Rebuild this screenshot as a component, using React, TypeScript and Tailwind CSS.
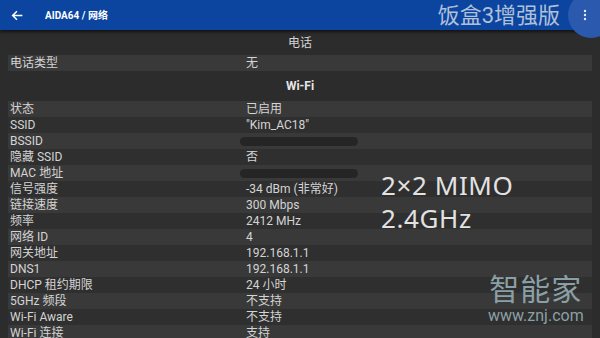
import React from "react";

const font = { fontFamily: 'Roboto, "Noto Sans CJK SC", sans-serif' };
const wideFont = { fontFamily: '"Noto Sans", "Noto Sans CJK SC", sans-serif' };

type Row = { label: string; value?: string; masked?: boolean };

const phoneRows: Row[] = [{ label: "电话类型", value: "无" }];

const wifiRows: Row[] = [
  { label: "状态", value: "已启用" },
  { label: "SSID", value: '"Kim_AC18"' },
  { label: "BSSID", masked: true },
  { label: "隐藏 SSID", value: "否" },
  { label: "MAC 地址", masked: true },
  { label: "信号强度", value: "-34 dBm (非常好)" },
  { label: "链接速度", value: "300 Mbps" },
  { label: "频率", value: "2412 MHz" },
  { label: "网络 ID", value: "4" },
  { label: "网关地址", value: "192.168.1.1" },
  { label: "DNS1", value: "192.168.1.1" },
  { label: "DHCP 租约期限", value: "24 小时" },
  { label: "5GHz 频段", value: "不支持" },
  { label: "Wi-Fi Aware", value: "不支持" },
  { label: "Wi-Fi 连接", value: "支持" },
];

const InfoRows: React.FC<{ rows: Row[] }> = ({ rows }) => (
  <div className="flex flex-col px-2">
    {rows.map((r, i) => (
      <div
        key={r.label}
        className={`flex h-4 items-center text-[12px] text-[#d4d4d4] ${
          i % 2 === 0 ? "bg-[#393939]" : "bg-[#2f2f2f]"
        }`}
      >
        <span className="w-[238px] pl-[2px]">{r.label}</span>
        {r.masked ? (
          <span className="-ml-[6px] h-[9px] w-[118px] rounded-full bg-[#252525]" />
        ) : (
          <span>{r.value}</span>
        )}
      </div>
    ))}
  </div>
);

const App: React.FC = () => {
  return (
    <div className="relative h-[338px] w-[600px] overflow-hidden bg-[#2c2c2c]" style={font}>
      <div className="relative z-10 flex h-[30px] items-center bg-[#0b45a0] shadow-[0_2px_3px_rgba(0,0,0,0.6)]">
        <svg className="ml-[11px]" width="13" height="13" viewBox="0 0 24 24" fill="none" stroke="#fff" strokeWidth="2.8">
          <path d="M21 12H4M11 4l-8 8 8 8" />
        </svg>
        <span className="ml-[21px] text-[10px] font-bold text-white">AIDA64 / 网络</span>
        <span className="ml-auto mr-[10px] text-[22px] text-[#b0c0d8]">饭盒3增强版</span>
        <div className="relative flex h-[30px] w-[30px] items-center justify-center">
          <div className="absolute -right-[14px] h-[46px] w-[46px] rounded-full bg-[#2a59ad]" />
          <svg className="relative" width="4" height="12" viewBox="0 0 4 12" fill="#e6eefc">
            <circle cx="2" cy="2" r="1.2" />
            <circle cx="2" cy="6" r="1.2" />
            <circle cx="2" cy="10" r="1.2" />
          </svg>
        </div>
      </div>

      <div className="flex h-[25px] items-center justify-center pt-[1px] text-[12px] text-[#d4d4d4]">电话</div>
      <InfoRows rows={phoneRows} />
      <div className="flex h-[30px] items-center justify-center text-[12px] font-bold text-[#e6e6e6]">Wi-Fi</div>
      <InfoRows rows={wifiRows} />

      <div
        className="absolute left-[381px] top-[169px] text-[26px] leading-[33px] tracking-[0.6px] text-[#e2e2e2]"
        style={wideFont}
      >
        <div>2×2 MIMO</div>
        <div>2.4GHz</div>
      </div>

      <div className="absolute left-[488px] top-[274px] flex flex-col items-center gap-[2px] text-[#8aa0a6]">
        <span className="text-[30px] leading-[32px] tracking-[1px]">智能家</span>
        <span className="text-[16px] leading-[16px]">www.znj.com</span>
      </div>
    </div>
  );
};

export default App;
